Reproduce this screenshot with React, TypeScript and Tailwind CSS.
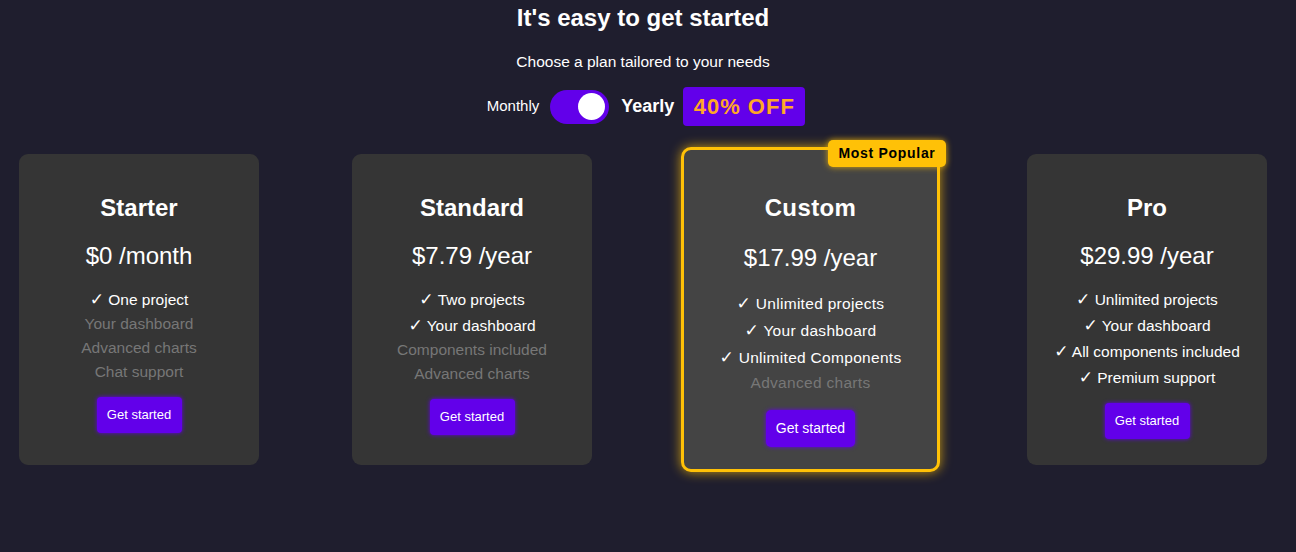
import React, { useState } from 'react'

type Feature = { label: string; included: boolean }

interface Plan {
  name: string
  price: string
  features: Feature[]
}

const plans: Plan[] = [
  {
    name: 'Starter',
    price: '$0 /month',
    features: [
      { label: 'One project', included: true },
      { label: 'Your dashboard', included: false },
      { label: 'Advanced charts', included: false },
      { label: 'Chat support', included: false },
    ],
  },
  {
    name: 'Standard',
    price: '$7.79 /year',
    features: [
      { label: 'Two projects', included: true },
      { label: 'Your dashboard', included: true },
      { label: 'Components included', included: false },
      { label: 'Advanced charts', included: false },
    ],
  },
  {
    name: 'Custom',
    price: '$17.99 /year',
    features: [
      { label: 'Unlimited projects', included: true },
      { label: 'Your dashboard', included: true },
      { label: 'Unlimited Components', included: true },
      { label: 'Advanced charts', included: false },
    ],
  },
  {
    name: 'Pro',
    price: '$29.99 /year',
    features: [
      { label: 'Unlimited projects', included: true },
      { label: 'Your dashboard', included: true },
      { label: 'All components included', included: true },
      { label: 'Premium support', included: true },
    ],
  },
]

const FeatureList: React.FC<{ features: Feature[]; popular?: boolean }> = ({ features, popular }) => (
  <ul className={popular ? 'mt-[18px] tracking-[0.3px]' : 'mt-4'}>
    {features.map((f) =>
      f.included ? (
        <li
          key={f.label}
          className={`${popular ? 'h-[27px] leading-[27px]' : 'h-[26px] leading-[26px]'} text-[15.5px] text-white`}
        >
          <span className="font-['DejaVu_Sans',sans-serif] text-[17px] font-bold">✓</span> {f.label}
        </li>
      ) : (
        <li key={f.label} className="h-6 text-[15.5px] leading-[24px] text-[#777777]">
          {f.label}
        </li>
      )
    )}
  </ul>
)

const PlanCard: React.FC<{ plan: Plan; className?: string }> = ({ plan, className }) => (
  <div
    className={`flex h-[311px] w-[240px] shrink-0 flex-col items-center rounded-[9px] bg-[#353535] pt-10 text-center ${className ?? ''}`}
  >
    <h2 className="text-[24px] font-bold leading-[28px] text-white">{plan.name}</h2>
    <p className="mt-5 text-[24px] leading-[28px] text-white">{plan.price}</p>
    <FeatureList features={plan.features} />
    <button className="mt-[13px] h-9 w-[85px] rounded-[4px] bg-[#6200ea] text-[13px] text-white shadow-[0_0_4px_#6200ea]">
      Get started
    </button>
  </div>
)

const PopularCard: React.FC<{ plan: Plan; className?: string }> = ({ plan, className }) => (
  <div
    className={`relative flex h-[325px] w-[259px] shrink-0 flex-col items-center rounded-[10px] border-[3px] border-[#ffc107] bg-[#444444] pt-11 text-center shadow-[0_0_12px_rgba(255,193,7,0.75)] ${className ?? ''}`}
  >
    <span className="absolute right-[-9px] top-[-10px] flex h-[27px] w-[118px] items-center justify-center rounded-[5px] bg-[#ffc107] text-[14px] font-bold tracking-[0.7px] text-black shadow-[0_0_6px_rgba(255,193,7,0.8)]">
      Most Popular
    </span>
    <h2 className="text-[24px] font-bold leading-[28px] tracking-[0.4px] text-white">{plan.name}</h2>
    <p className="mt-[22px] text-[24px] leading-[28px] text-white">{plan.price}</p>
    <FeatureList features={plan.features} popular />
    <button className="mt-[15px] h-[37px] w-[89px] rounded-[5px] bg-[#6200ea] text-[14px] text-white shadow-[0_0_4px_#6200ea]">
      Get started
    </button>
  </div>
)

export default function App() {
  const [yearly, setYearly] = useState(true)

  return (
    <div className="min-h-screen w-full bg-[#1f1e2e] font-['Liberation_Sans',Arial,sans-serif]">
      <div className="flex w-[1286px] flex-col items-center">
        <h1 className="mt-[5px] text-[24px] font-bold leading-[26px] text-white">
          It's easy to get started
        </h1>
        <p className="mt-[21px] text-[15.5px] leading-[20px] text-white">
          Choose a plan tailored to your needs
        </p>

        <div className="ml-[6px] mt-[15px] flex h-[39px] items-center">
          <span className="text-[15px] text-white">Monthly</span>
          <button
            onClick={() => setYearly(!yearly)}
            className={`ml-[11px] flex h-[34px] w-[59px] items-center rounded-full bg-[#6200ea] px-[4px] ${
              yearly ? 'justify-end' : 'justify-start'
            }`}
          >
            <span className="h-[27px] w-[27px] rounded-full bg-white" />
          </button>
          <span className="ml-[12px] text-[18px] font-bold text-white">Yearly</span>
          <span className="ml-[9px] flex h-[39px] w-[122px] items-center justify-center rounded-[4px] bg-[#6200ea] text-[22px] font-bold tracking-[1px] text-[#ffa726]">
            40% OFF
          </span>
        </div>

        <div className="mt-[21px] flex w-full items-start px-[19px]">
          <PlanCard plan={plans[0]} className="mt-[7px]" />
          <PlanCard plan={plans[1]} className="ml-[93px] mt-[7px]" />
          <PopularCard plan={plans[2]} className="ml-[89px]" />
          <PlanCard plan={plans[3]} className="ml-[87px] mt-[7px]" />
        </div>
      </div>
    </div>
  )
}
